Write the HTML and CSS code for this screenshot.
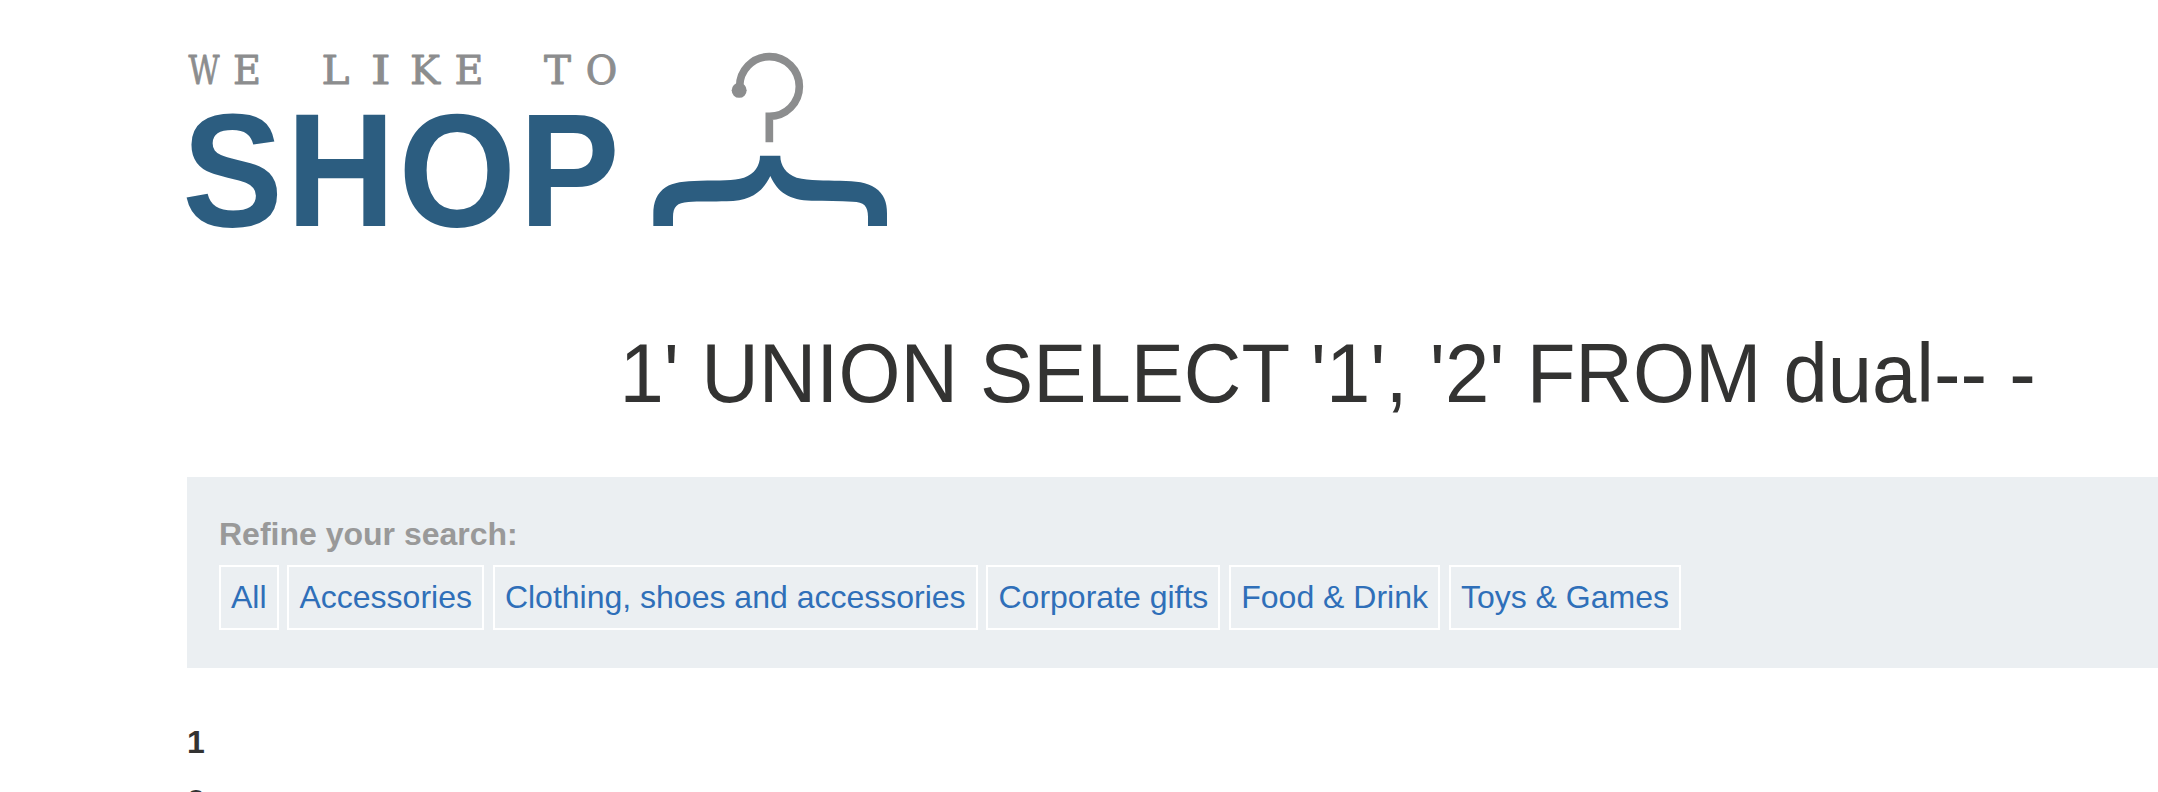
FILE: index.html
```html
<!DOCTYPE html>
<html lang="en">
<head>
<meta charset="utf-8">
<title>We Like to Shop</title>
<link rel="stylesheet" href="styles.css">
</head>
<body>
<main class="page">
  <svg class="logo" viewBox="0 0 720 200" role="img" aria-label="We like to shop">
    <g class="logo-tagline">
      <text y="43.6" x="1.500" textLength="31" lengthAdjust="spacingAndGlyphs">W</text>
      <text y="43.6" x="46" textLength="28" lengthAdjust="spacingAndGlyphs">E</text>
      <text y="43.6" x="134.500" textLength="28" lengthAdjust="spacingAndGlyphs">L</text>
      <text y="43.6" x="183.700" textLength="20" lengthAdjust="spacingAndGlyphs">I</text>
      <text y="43.6" x="223" textLength="30" lengthAdjust="spacingAndGlyphs">K</text>
      <text y="43.6" x="267.500" textLength="29" lengthAdjust="spacingAndGlyphs">E</text>
      <text y="43.6" x="357" textLength="27" lengthAdjust="spacingAndGlyphs">T</text>
      <text y="43.6" x="398.700" textLength="31.500" lengthAdjust="spacingAndGlyphs">O</text>
    </g>
    <g transform="translate(-4.7 186.2) scale(1 1.07)">
      <text class="logo-name" x="0" y="0">SHOP</text>
    </g>
    <g transform="translate(443 -10) scale(.33333)">
      <path class="hook" d="M329 170A89.500 89.500 0 1 1 418 258V336" transform="translate(0 1)"/>
      <circle class="hook-end" cx="327.500" cy="181" r="22.500"/>
      <path class="hanger" d="M390 377H451C451 407 468 431 500 443C540 452 585 451 630 452C680 453 710 456 736 474C762 492 771 517 771 550V588H714V560C714 528 702 516 668 515C630 513 585 513 545 512C478 511 443 487 421 438C397 487 362 512 290 514C250 515 205 513 175 516C141 518 129 530 129 562V588H70V553C70 515 81 490 107 472C130 456 160 454 211 452C270 450 310 453 342 443C374 431 390 407 390 377Z"/>
    </g>
  </svg>
  <h1 class="title">1' UNION SELECT '1', '2' FROM dual-- -</h1>
  <section class="filters">
    <p class="filters-label">Refine your search:</p>
    <nav class="filter-list">
      <a class="filter" href="#">All</a>
      <a class="filter" href="#">Accessories</a>
      <a class="filter" href="#">Clothing, shoes and accessories</a>
      <a class="filter" href="#">Corporate gifts</a>
      <a class="filter" href="#">Food &amp; Drink</a>
      <a class="filter" href="#">Toys &amp; Games</a>
    </nav>
  </section>
  <div class="results">
    <div class="result-name">1</div>
    <div class="result-text">2</div>
  </div>
</main>
</body>
</html>
```
FILE: styles.css
```css
html, body { height: 100%; }
body {
  margin: 0;
  overflow: hidden;
  background: #fff;
  color: #333332;
  font: 32px/40px "Liberation Sans", Arial, sans-serif;
}
.page { padding: 40px 0 0 187px; }
.logo { display: block; width: 720px; height: 200px; overflow: visible; }
.logo-tagline {
  font: 39.5px "DejaVu Serif", serif;
  fill: #8c8d8e;
  stroke: #8c8d8e;
  stroke-width: .9px;
  stroke-linejoin: round;
}
.logo-name {
  font: bold 151px "Liberation Sans", Arial, sans-serif;
  letter-spacing: 3.2px;
  fill: #2c5d80;
}
.hook { fill: none; stroke: #8c8d8e; stroke-width: 23; }
.hook-end { fill: #8c8d8e; }
.hanger { fill: #2c5d80; }
.title {
  margin: 88px 0 0;
  padding-left: 432.5px;
  font-size: 79.7px;
  font-weight: 400;
  line-height: 92px;
  transform: scaleY(1.04);
  white-space: nowrap;
}
.filters {
  box-sizing: border-box;
  height: 191px;
  margin-top: 57px;
  padding: 37px 32px 0;
  background: #ebeff2;
}
.filters-label { margin: 0 0 11px; color: #999; font-weight: 700; }
.filter-list { display: flex; gap: 8.92px; }
.filter {
  box-sizing: border-box;
  height: 65px;
  padding: 10px;
  border: 2px solid #fff;
  color: #2f6fb9;
  text-decoration: none;
  white-space: nowrap;
}
.results { padding-top: 54px; }
.result-name { font-weight: 700; }
.result-text { margin-top: 19px; }
```
